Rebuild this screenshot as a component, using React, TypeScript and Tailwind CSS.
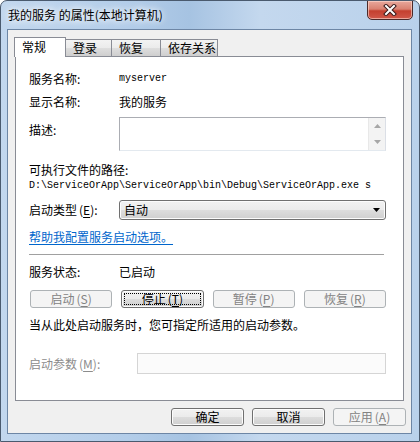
import React from 'react';

function Mn({ k }: { k: string }) {
  return (
    <span className="ml-[2px]">
      (<span className="underline underline-offset-2">{k}</span>)
    </span>
  );
}

type BtnProps = {
  children: React.ReactNode;
  disabled?: boolean;
  focused?: boolean;
  className?: string;
};

function Btn({ children, disabled, focused, className = '' }: BtnProps) {
  if (disabled) {
    return (
      <div className={`h-[18px] rounded-[3px] border border-[#adb2b5] bg-[#f4f4f4] text-[#838383] flex items-center justify-center leading-[16px] ${className}`}>
        {children}
      </div>
    );
  }
  return (
    <div className={`h-[18px] rounded-[3px] border border-[#707070] bg-[linear-gradient(#f2f2f2_0%,#ebebeb_50%,#dddddd_50%,#cfcfcf_100%)] shadow-[inset_0_0_0_1px_#fcfcfc] flex p-[2px] leading-[12px] ${className}`}>
      <div className={`flex-1 flex items-center justify-center border border-dotted ${focused ? 'border-black' : 'border-transparent'}`}>
        {children}
      </div>
    </div>
  );
}

const tabs = ['登录', '恢复', '依存关系'];
const tabWidths = ['w-[47px]', 'w-[50px]', 'w-[58px]'];

export default function App() {
  return (
    <div className="w-[420px] h-[442px] flex flex-col rounded-t-[7px] border border-[#4a5a6e] overflow-hidden bg-[linear-gradient(90deg,#c2d7ee_0%,#b3cde9_30%,#a6c3e2_45%,#c4d8ee_62%,#b9d1eb_100%)] font-['Noto_Sans_CJK_SC',sans-serif] text-[12px] text-black">
      {/* title bar */}
      <div className="h-[28px] flex items-start justify-between pl-[7px] pr-[6px]">
        <div className="mt-[6px] leading-[16px] [text-shadow:0_0_6px_#ffffff,0_0_10px_#ffffff]">
          我的服务 的属性(本地计算机)
        </div>
        <div className="-mt-px w-[46px] h-[20px] rounded-b-[5px] border border-[#4b2a2a] bg-[linear-gradient(#e8a89c_0%,#d98171_45%,#c4402f_55%,#d0584a_100%)] shadow-[inset_0_0_0_1px_rgba(255,220,210,0.6)] flex items-center justify-center">
          <svg width="14" height="12" viewBox="0 0 14 12">
            <path d="M3 2l8 8M11 2l-8 8" stroke="#3a1a1a" strokeWidth="4" strokeLinecap="square" />
            <path d="M3 2l8 8M11 2l-8 8" stroke="#ffffff" strokeWidth="2" strokeLinecap="square" />
          </svg>
        </div>
      </div>

      {/* client */}
      <div className="ml-[6px] mr-[7px] mb-[7px] w-[405px] h-[405px] border border-[#6d86a5] bg-[#f0f0f0] flex flex-col">
        {/* tabs */}
        <div className="relative z-10 pl-[6px] pt-[7px] flex items-end -mb-px">
          <div className="w-[52px] h-[20px] bg-white border border-b-0 border-[#898c95] pl-[7px] leading-[18px]">
            常规
          </div>
          {tabs.map((t, i) => (
            <div
              key={t}
              className={`${tabWidths[i]} h-[18px] -ml-px border border-[#898c95] bg-[linear-gradient(#f3f3f3_0%,#ebebeb_50%,#dedede_50%,#cfcfcf_100%)] pl-[7px] leading-[16px]`}
            >
              {t}
            </div>
          ))}
        </div>

        {/* panel */}
        <div className="relative z-0 ml-[7px] w-[389px] h-[345px] bg-white border border-[#898c95] pl-[13px] pr-[17px] flex flex-col leading-[16px]">
          <div className="mt-[14px] h-[16px] flex">
            <div className="w-[90px]">服务名称:</div>
            <div className="font-['Liberation_Mono',monospace] text-[10px]">myserver</div>
          </div>
          <div className="mt-[7px] h-[16px] flex">
            <div className="w-[90px]">显示名称:</div>
            <div>我的服务</div>
          </div>
          <div className="mt-[7px] flex">
            <div className="w-[90px] mt-[5px]">描述:</div>
            <div className="w-[267px] h-[34px] border border-[#abadb3] border-r-[#dbdfe6] border-b-[#e3e9ef] bg-white flex justify-end">
              <div className="w-[17px] h-full bg-[#f3f3f3] border-l border-[#e8e8e8] flex flex-col items-center justify-between py-[6px]">
                <svg width="7" height="4" viewBox="0 0 7 4"><path d="M3.5 0L7 4H0z" fill="#a6a6a6" /></svg>
                <svg width="7" height="4" viewBox="0 0 7 4"><path d="M0 0h7L3.5 4z" fill="#a6a6a6" /></svg>
              </div>
            </div>
          </div>
          <div className="mt-[11px] h-[16px]">可执行文件的路径:</div>
          <div className="h-[16px] font-['Liberation_Mono',monospace] text-[10px] whitespace-nowrap">
            D:\ServiceOrApp\ServiceOrApp\bin\Debug\ServiceOrApp.exe s
          </div>
          <div className="mt-[6px] flex items-center">
            <div className="w-[90px]">
              启动类型<Mn k="E" />:
            </div>
            <div className="w-[267px] h-[20px] rounded-[3px] border border-[#707070] bg-[linear-gradient(#f2f2f2_0%,#ebebeb_50%,#dddddd_50%,#cfcfcf_100%)] shadow-[inset_0_0_0_1px_#fcfcfc] flex items-center pl-[4px] pr-[5px]">
              <span className="flex-1">自动</span>
              <svg width="7" height="4" viewBox="0 0 7 4"><path d="M0 0h7L3.5 4z" fill="#000" /></svg>
            </div>
          </div>
          <div className="mt-[9px] h-[16px]">
            <span className="text-[#0066cc] underline underline-offset-2">帮助我配置服务启动选项。</span>
          </div>
          <div className="mt-[9px] border-t border-[#a0a0a0] h-px mr-[2px]" />
          <div className="mt-[9px] h-[16px] flex">
            <div className="w-[90px]">服务状态:</div>
            <div>已启动</div>
          </div>
          <div className="mt-[10px] ml-px grid grid-cols-4 gap-[9px]">
            <Btn disabled>启动<Mn k="S" /></Btn>
            <Btn focused>停止<Mn k="T" /></Btn>
            <Btn disabled>暂停<Mn k="P" /></Btn>
            <Btn disabled>恢复<Mn k="R" /></Btn>
          </div>
          <div className="mt-[9px] h-[16px]">当从此处启动服务时，您可指定所适用的启动参数。</div>
          <div className="mt-[20px] flex items-center">
            <div className="w-[108px] text-[#8c8c8c]">
              启动参数<Mn k="M" />:
            </div>
            <div className="w-[249px] h-[21px] border border-[#d5d5d5] bg-[#fbfbfb]" />
          </div>
        </div>

        {/* bottom buttons */}
        <div className="mt-[7px] pr-[5px] flex justify-end gap-[8px]">
          <Btn className="w-[73px]">确定</Btn>
          <Btn className="w-[73px]">取消</Btn>
          <Btn disabled className="w-[73px]">应用<Mn k="A" /></Btn>
        </div>
      </div>
    </div>
  );
}
